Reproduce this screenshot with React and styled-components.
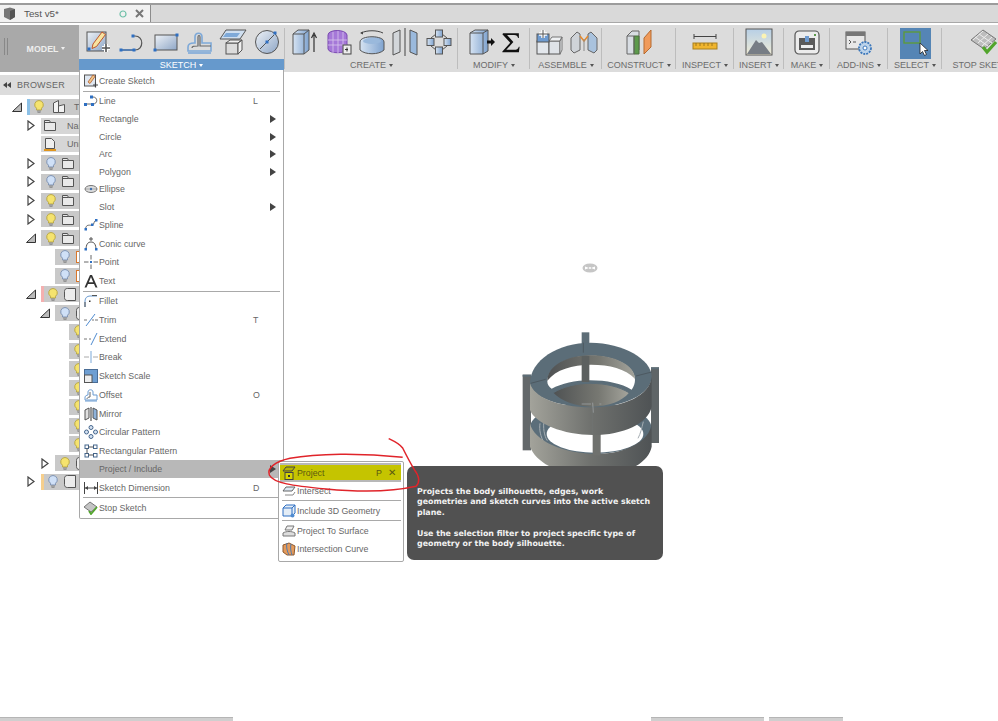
import React from "react";
import styled, { createGlobalStyle } from "styled-components";

const Global = createGlobalStyle`
  html, body { margin: 0; padding: 0; background: #fff; }
  body { font-family: "Liberation Sans", "Open Sans", sans-serif; }
`;

const Page = styled.div`
  position: relative; width: 998px; height: 721px; overflow: hidden; background: #fff;
  display: flex; flex-direction: column;
`;
const TabBar = styled.div`
  height: 17px; margin-top: 3px; border-top: 2px solid #9c9c9c; border-bottom: 1px solid #a8a8a8;
  background: #d9d9d9; display: flex; flex: none;
`;
const DocTab = styled.div`
  width: 151px; background: #f1f1f1; border-right: 1px solid #8c8c8c; display: flex; align-items: center;
  font-size: 9.8px; color: #555; padding-left: 3px; box-sizing: border-box; gap: 8px;
`;
const TabTitle = styled.span` flex: 1; `;
const Toolbar = styled.div`
  height: 47px; margin-top: 2px; background: #dcdcdc; display: flex; flex: none; overflow: hidden;
`;
const ModelBlock = styled.div`
  width: 79px; flex: none; background: #a9a9a9; color: #eee; font-size: 8.8px; font-weight: 700; display: flex;
  align-items: center; justify-content: center; gap: 3px; padding: 0 0 0 13px; box-sizing: border-box; position: relative;
  &::before { content: ""; position: absolute; left: 4px; top: 13px; width: 2px; height: 17px; border-left: 1px solid #888; border-right: 1px solid #888; }
`;
const Group = styled.div`
  width: ${p => p.$w}px; flex: none; display: flex; flex-direction: column; position: relative; box-sizing: border-box;
  ${p => p.$sep ? "&::after { content: ''; position: absolute; right: 0; top: 3px; bottom: 3px; width: 1px; background: #bdbdbd; }" : ""}
`;
const Icons = styled.div`
  height: 34px; display: flex; align-items: center; justify-content: ${p => p.$justify || "center"};
  gap: ${p => p.$gap || 0}px; padding-left: ${p => p.$pad || 0}px; box-sizing: border-box;
`;
const GroupLabel = styled.div`
  height: 11px; font-size: 9px; line-height: 11px; display: flex; align-items: center; justify-content: center; gap: 3px; padding-top: 1px; box-sizing: border-box;
  color: ${p => p.$active ? "#fff" : "#6b6b6b"}; background: ${p => p.$active ? "#6699cc" : "transparent"}; white-space: nowrap;
  margin-right: ${p => p.$active ? "1px" : "0"};
`;
const Caret = styled.i`
  width: 0; height: 0; border-left: 2.5px solid transparent; border-right: 2.5px solid transparent;
  border-top: 3px solid ${p => p.$c || "#555"};
`;
const SelectTile = styled.div`
  width: 31px; height: 31px; background: #5585b5; margin-top: 3px; display: flex;
`;
const Body = styled.div` flex: 1; display: flex; min-height: 0; `;
const Browser = styled.div` width: 284px; flex: none; padding-top: 3px; `;
const BrowserBar = styled.div`
  height: 20px; background: #dcdcdc; display: flex; align-items: center; gap: 6px; padding-left: 3px;
  font-size: 9px; color: #666; letter-spacing: .2px;
`;
const TreeRows = styled.div` display: flex; flex-direction: column; padding-top: 2.4px; `;
const TreeRow = styled.div`
  height: 18.75px; display: flex; align-items: center; padding-left: ${p => p.$x}px; position: relative;
`;
const Twisty = styled.span`
  width: ${p => p.$slot}px; display: flex; align-items: center; flex: none;
`;
const Chip = styled.div`
  flex: 1; height: 16px; background: ${p => p.$light ? "#d6d6d6" : "#c9c9c9"}; display: flex; align-items: center; gap: ${p => p.$gap || 6}px;
  padding-left: ${p => p.$light ? 3 : p.$strip ? 4 : 5}px; box-sizing: border-box; font-size: 9px; color: #666;
  border-left: ${p => p.$strip ? `3px solid ${p.$strip}` : "0"};
`;
const Canvas = styled.div` flex: 1; position: relative; `;
const Footer = styled.div` height: 4px; flex: none; display: flex; overflow: hidden; position: relative; `;
const FootBar = styled.div`
  width: ${p => p.$w}px; margin-left: ${p => p.$m}px; background: #cfcfcf; border-top: 1px solid #b5b5b5; flex: none;
`;
const Menu = styled.div`
  position: absolute; left: 79px; top: 70px; width: 205px; background: #fff; border: 1px solid #a8a8a8; border-top: 0;
  border-radius: 0 0 2px 2px; box-sizing: border-box; padding: 1px 0 0 0; display: flex; flex-direction: column; height: 449px;
`;
const Row = styled.div`
  height: ${p => p.$h}px; display: flex; align-items: center; flex: none; position: relative; font-size: 8.8px; color: #666; box-sizing: border-box;
  background: ${p => p.$hot ? "#b8b8b8" : "transparent"}; padding-left: 2px;
`;
const RowIcon = styled.span` width: 17px; height: 14px; display: flex; align-items: center; justify-content: center; flex: none; `;
const RowLabel = styled.span` flex: 1; white-space: nowrap; `;
const Shortcut = styled.span` width: 30px; flex: none; `;
const Arrow = styled.i`
  width: 0; height: 0; flex: none; margin-right: 7px; border-top: 4px solid transparent; border-bottom: 4px solid transparent;
  border-left: 6px solid #444;
`;
const Sep = styled.div` height: 1px; flex: none; margin: 0 3px; background: #a9a9a9; `;
const Sub = styled.div`
  position: absolute; left: 278px; top: 461px; width: 126px; height: 101px; background: #fff; border: 1px solid #a8a8a8;
  border-radius: 2px; box-sizing: border-box; padding: 1px 2px 0 1px; display: flex; flex-direction: column;
`;
const SubRow = styled(Row)`
  padding-left: 1px;
  background: ${p => p.$mark ? "#c5c400" : "transparent"};
  ${p => p.$mark ? "border-top: 2px solid #b8b8b8; border-bottom: 2px solid #b8b8b8; color: #5b5b10;" : ""}
`;
const SubIcon = styled(RowIcon)` width: 16px; `;
const SubKey = styled.span` width: 12px; flex: none; `;
const SubSep = styled.div` height: 1px; flex: none; background: #a9a9a9; margin-left: 2px; `;
const Close = styled.span` width: 13px; flex: none; font-size: 10px; line-height: 1; `;
const Tip = styled.div`
  position: absolute; left: 407px; top: 466px; width: 256px; height: 94px; background: #515151; border-radius: 7px;
  box-sizing: border-box; padding: 20.5px 8px 0 10px; color: #f2f2f2; font-family: "DejaVu Sans", sans-serif;
  font-weight: 700; font-size: 7.9px; line-height: 10.6px; white-space: nowrap;
`;
const TipGap = styled.div` height: 10.6px; `;
const Overlay = styled.svg` position: absolute; left: ${p => p.$x}px; top: ${p => p.$y}px; pointer-events: none; `;

const B = "#2e6fc2";
const S = ({ n = 28, children }) => <svg width={n} height={n} viewBox="0 0 28 28">{children}</svg>;
const Dot = ({ x, y }) => <rect x={x - 1.5} y={y - 1.5} width="3" height="3" fill={B} />;

const Defs = () => (
  <svg width="0" height="0" style={{ position: "absolute" }}>
    <defs>
      <linearGradient id="wall" x1="0" x2="1" y1="0" y2="0">
        <stop offset="0" stopColor="#a3a39b" /><stop offset=".5" stopColor="#6f716e" /><stop offset="1" stopColor="#4f5355" />
      </linearGradient>
      <linearGradient id="inner" x1="0" x2="1" y1="0" y2="0">
        <stop offset="0" stopColor="#4f5253" /><stop offset=".6" stopColor="#777872" /><stop offset="1" stopColor="#a4a49c" />
      </linearGradient>
      <linearGradient id="steel" x1="0" x2="1" y1="0" y2="1">
        <stop offset="0" stopColor="#eef2f7" /><stop offset="1" stopColor="#8ea6c6" />
      </linearGradient>
      <linearGradient id="blue3d" x1="0" x2="1" y1="0" y2="0">
        <stop offset="0" stopColor="#d6e3f2" /><stop offset="1" stopColor="#7fa3cf" />
      </linearGradient>
      <linearGradient id="mount" x1="0" x2="0" y1="0" y2="1">
        <stop offset="0" stopColor="#b7cfe6" /><stop offset="1" stopColor="#f0ecd6" />
      </linearGradient>
    </defs>
  </svg>
);

const tools = {
  sketch: <S><rect x="3" y="4" width="19" height="19" fill="url(#steel)" stroke="#555" /><path d="M9 16l9-12 3.500 2.500-9 12-4.500 2z" fill="#f7e3a0" stroke="#c0562a" /><path d="M18 20h8M22 16v8" stroke="#fff" strokeWidth="4" /><path d="M18 20h8M22 16v8" stroke="#555" strokeWidth="1.6" /><Dot x="5" y="21" /></S>,
  line: <S><path d="M3 22h14c9 0 9-14 0-14h-3" fill="none" stroke="#555" strokeWidth="1.2" /><Dot x="3" y="22" /><Dot x="16" y="22" /><Dot x="15" y="8" /><path d="M3 22h13" stroke={B} strokeWidth="1.2" /></S>,
  rect: <S><rect x="3" y="7" width="22" height="15" fill="url(#steel)" stroke="#555" /><Dot x="3" y="22" /><Dot x="25" y="7" /></S>,
  offset: <S><path d="M3 23v-4c0-3 3-4 6-4h1V9c0-5 7-5 7 0v6h9v8z" fill="none" stroke="#7ea9d8" strokeWidth="1.6" /><path d="M7 20c0-2 2-2 6-2V9c0-2 2-2 2 0v9h11" fill="none" stroke="#666" strokeWidth="1.2" /><path d="M3 25h23" stroke="#7ea9d8" strokeWidth="1.6" /></S>,
  project: <S><path d="M7 2h20l-6 9H1z" fill="#cfdff0" stroke="#555" /><path d="M7 5h14l-3 4H4z" fill="#7ea9d8" /><rect x="7" y="15" width="12" height="11" fill="#dcdcdc" stroke="#555" /><path d="M7 15l4-3h12l-4 3zM19 15l4-3v10l-4 4z" fill="#f0f0f0" stroke="#555" /></S>,
  circle: <S><circle cx="14" cy="14" r="11.5" fill="url(#steel)" stroke="#555" /><path d="M7 21L21 7" stroke="#555" /><Dot x="14" y="14" /><Dot x="22" y="5" /></S>,
  extrude: <S><path d="M3 6l5-4h11v20l-5 4H3z" fill="url(#blue3d)" stroke="#555" /><path d="M3 6h11v20M14 6l5-4" fill="none" stroke="#555" /><path d="M24 24V7M21.5 10L24 5l2.5 5" fill="none" stroke="#333" strokeWidth="1.2" /></S>,
  mesh: <S><path d="M4 7c0-6 18-6 19 0v14c-1 5-18 5-19 0z" fill="#a578d8" stroke="#7a4bb0" /><path d="M4 12h19M4 17h19M9 4v22M14 3v24M19 4v22" stroke="#d9c6ee" strokeWidth=".8" /><rect x="19" y="17" width="8" height="9" fill="#eee" stroke="#444" /><path d="M21 21.500h3M23 19.500v4" stroke="#333" /></S>,
  revolve: <S><path d="M2 14c0-7 24-7 24 0v8c-5 5-19 5-24 0z" fill="url(#blue3d)" stroke="#555" /><ellipse cx="14" cy="13" rx="9" ry="3" fill="#9ab9dc" /><path d="M3 5c6-3 16-3 22 0" fill="none" stroke="#444" /><path d="M2 5l3-1.500v3z" fill="#444" /></S>,
  mirror: <S><path d="M2 5l7-3v22l-7 3z" fill="#d2d6da" stroke="#555" /><path d="M26 5l-7-3v22l7 3z" fill="#9ab9dc" stroke="#555" /><path d="M14 0v28" stroke="#444" /></S>,
  pattern: <S><g fill="url(#blue3d)" stroke="#555"><rect x="10.500" y="2" width="7" height="7" /><rect x="19" y="10.500" width="7" height="7" /><rect x="10.500" y="19" width="7" height="7" /><rect x="2" y="10.500" width="7" height="7" /></g><path d="M6 10l5-4M22 10l-5-4M6 18l5 4M22 18l-5 4" stroke="#555" /></S>,
  press: <S><path d="M3 5l5-3h13v21l-5 3H3z" fill="url(#blue3d)" stroke="#555" /><path d="M3 5h13v21M16 5l5-3" fill="none" stroke="#555" /><path d="M20 14h5" stroke="#111" strokeWidth="3" /><path d="M24 10l4 4-4 4z" fill="#111" /></S>,
  sigma: <svg width="22" height="24" viewBox="0 0 28 28"><path d="M4 3h20v6h-1c-.5-3-2-4-5-4H9l8 9-9 10h10c3 0 5-1 6-4h1l-1 7H3v-1l10-11L3 4z" fill="#111" /></svg>,
  joint: <S><rect x="2" y="13" width="12" height="13" fill="#e3e7ec" stroke="#555" /><rect x="14" y="13" width="11" height="13" fill="#dfe3e8" stroke="#555" /><path d="M14 13l3-4h10l-2 4zM25 13l2-4v13l-2 4z" fill="#eef0f2" stroke="#777" /><rect x="2" y="6" width="12" height="8" fill="#6e9bd0" stroke="#555" /><path d="M4 6h8M8 2v8" stroke="#fff" strokeWidth="3.500" /><path d="M4 6h8M8 2v8" stroke="#555" strokeWidth="1" /></S>,
  motion: <S><path d="M1 10l6-6 3 2v16l-6 3-3-3z" fill="#cfd3d8" stroke="#666" /><path d="M27 10l-6-6-3 2v16l6 3 3-3z" fill="#a9c2dd" stroke="#666" /><path d="M10 8l4 5 4-5" fill="none" stroke="#e58a2e" strokeWidth="1.500" /><path d="M14 11v12" stroke="#888" /></S>,
  plane: <S><path d="M2 8l5-5h7v19l-5 4H2z" fill="#d8dde3" stroke="#666" /><path d="M9 8h5v18H9z" fill="#5c9a4c" stroke="#4a6f3c" /><path d="M2 8h7v18" fill="none" stroke="#666" /><path d="M19 10l7-8v17l-7 7z" fill="#f09a5a" stroke="#b56a30" /></S>,
  ruler: <S><path d="M3 6v5M25 6v5M3 8.500h22" stroke="#444" /><rect x="2" y="15" width="24" height="6" fill="#f0b52e" stroke="#a9801f" /><path d="M5 15v3M9 15v3M13 15v3M17 15v3M21 15v3" stroke="#8a6a1a" strokeWidth=".8" /></S>,
  image: <S><rect x="1" y="1" width="26" height="26" fill="url(#mount)" stroke="#555" /><circle cx="19" cy="8" r="2.500" fill="#fbf3b4" /><path d="M2 26l9-14 3 3 3-1 9 12z" fill="#777d85" /></S>,
  make: <S><rect x="2" y="3" width="24" height="23" rx="4" fill="#ececec" stroke="#555" strokeWidth="1.200" /><rect x="6" y="10" width="16" height="12" fill="#5a5a5a" /><rect x="12" y="8" width="4" height="6" fill="#6e9bd0" /><path d="M8 17h12v3H8z" fill="#eee" /><rect x="21" y="6" width="2" height="2" fill="#5c9a4c" /></S>,
  addin: <S><rect x="1" y="4" width="19" height="17" fill="#e8e8e8" stroke="#555" /><rect x="1" y="4" width="19" height="4" fill="#777" /><path d="M4 12l2 2-2 2M8 14h3" stroke="#555" fill="none" /><circle cx="20" cy="20" r="6" fill="#bcd3ea" stroke="#3d78bb" strokeWidth="1.800" strokeDasharray="2 1" /><circle cx="20" cy="20" r="2" fill="#fff" stroke="#3d78bb" /></S>,
  cursor: <svg width="31" height="31" viewBox="0 0 31 31"><rect x="4" y="4" width="16" height="11" fill="none" stroke="#5d9a3c" strokeWidth="1.400" /><path d="M20 15v11l2.500-2.500 2 4 2-1-2-4 3.500 0z" fill="#fff" stroke="#222" strokeWidth=".8" /></svg>,
  stop: <S><path d="M1 12L13 2l13 9-12 10z" fill="#bdbdbd" stroke="#777" /><path d="M5 9l13 9M9 6l13 9M13 3L3 12M18 6L8 15M22 9L12 18" stroke="#eee" /><path d="M13 19l4 5 9-10" fill="none" stroke="#52a52c" strokeWidth="3.200" /></S>,
};

const m = {
  line: <svg width="14" height="12" viewBox="0 0 14 12"><path d="M1 9h8c5 0 5-7 0-7H7" fill="none" stroke="#666" /><rect y="8" width="3" height="3" fill={B} /><rect x="7" y="8" width="3" height="3" fill={B} /><rect x="6" y="0.500" width="3" height="3" fill={B} /></svg>,
  ellipse: <svg width="14" height="10" viewBox="0 0 14 10"><ellipse cx="7" cy="5" rx="6" ry="3.500" fill="#ddd" stroke="#777" /><circle cx="7" cy="5" r="1.200" fill={B} /><path d="M1 5h12" stroke="#777" strokeWidth=".5" /></svg>,
  spline: <svg width="14" height="14" viewBox="0 0 14 14"><path d="M1.500 12c0-7 5-4 7-5s1-4 4-5" fill="none" stroke="#666" /><rect x="0.500" y="10" width="2.500" height="2.500" fill={B} /><rect x="7" y="5.500" width="2.500" height="2.500" fill={B} /><rect x="11" y="1" width="2.500" height="2.500" fill={B} /></svg>,
  conic: <svg width="14" height="14" viewBox="0 0 14 14"><path d="M2 13c0-6 2-8 5-8s5 2 5 8" fill="none" stroke="#555" /><path d="M7 0v4M5 2h4" stroke="#555" /><rect x="0.500" y="11" width="2.500" height="2.500" fill={B} /><rect x="11" y="11" width="2.500" height="2.500" fill={B} /></svg>,
  point: <svg width="14" height="14" viewBox="0 0 14 14"><path d="M0 7h4.500M9.500 7H14M7 0v4.500M7 9.500V14" stroke="#666" /><rect x="6" y="6" width="2" height="2" fill={B} /></svg>,
  text: <svg width="14" height="14" viewBox="0 0 14 14"><path d="M0.500 13.500L6 1h2l5.500 12.500h-2L10 10H4l-1.500 3.500zM4.800 8.200h4.400L7 3z" fill="#333" /></svg>,
  fillet: <svg width="14" height="14" viewBox="0 0 14 14"><path d="M1 13V7c0-3 2-5 5-5h7" fill="none" stroke="#6a9bd1" /><path d="M1 8v5M8 1.500h5" stroke="#555" /><rect x="5" y="6.500" width="1.500" height="1.500" fill="#333" /></svg>,
  trim: <svg width="14" height="14" viewBox="0 0 14 14"><path d="M0 7h3M8 7h2M11 7h3" stroke="#777" /><path d="M2 13L11 1" stroke="#4f8bd0" /></svg>,
  extend: <svg width="14" height="14" viewBox="0 0 14 14"><path d="M0 7h3M5 7h2" stroke="#777" /><path d="M7 13L13 1" stroke="#4f8bd0" /></svg>,
  break: <svg width="14" height="14" viewBox="0 0 14 14"><path d="M0 7h5M9 7h5" stroke="#aaa" /><path d="M7 1v12" stroke="#7ba8d8" /></svg>,
  scale: <svg width="14" height="14" viewBox="0 0 14 14"><rect x="0.500" y="0.500" width="13" height="13" fill="#6f9fd2" stroke="#4a6d96" /><rect x="0.500" y="6" width="7.500" height="7.500" fill="#eee" stroke="#555" /></svg>,
  offset: <svg width="14" height="14" viewBox="0 0 14 14"><path d="M1 12V9c0-1 2-2 3-2V4c0-3 5-3 5 0v3h4v5z" fill="none" stroke="#6a9bd1" /><path d="M1 13h12" stroke="#6a9bd1" /><path d="M3 11c0-1 1-2 3-2V4" fill="none" stroke="#666" /></svg>,
  mirror: <svg width="14" height="14" viewBox="0 0 14 14"><path d="M1 3l4-2v10l-4 2z" fill="#e0e0e0" stroke="#555" /><path d="M13 3L9 1v10l4 2z" fill="#8fb2d9" stroke="#555" /><path d="M7 0v14" stroke="#333" /></svg>,
  circular: <svg width="14" height="14" viewBox="0 0 14 14"><g fill="#d6e3f2" stroke="#45668c"><circle cx="7" cy="2.500" r="2" /><circle cx="11.500" cy="7" r="2" /><circle cx="7" cy="11.500" r="2" /><circle cx="2.500" cy="7" r="2" /></g></svg>,
  rectp: <svg width="14" height="14" viewBox="0 0 14 14"><g fill="#fff" stroke="#45668c"><rect x="1" y="1" width="3.500" height="3.500" /><rect x="9.500" y="1" width="3.500" height="3.500" /><rect x="1" y="9.500" width="3.500" height="3.500" /><rect x="9.500" y="9.500" width="3.500" height="3.500" /></g><path d="M4.500 3h5M3 4.500v5M4.500 11h5" stroke="#555" /></svg>,
  dim: <svg width="14" height="14" viewBox="0 0 14 14"><path d="M.5 1v12M13.500 1v12M1 7h12" stroke="#444" /><path d="M1 7l3-2v4zM13 7l-3-2v4z" fill="#444" /></svg>,
  stop: <svg width="14" height="14" viewBox="0 0 14 14"><path d="M0 6l6-5 7 5-6 5z" fill="#c4c4c4" stroke="#777" /><path d="M5 10l2 3 6-7" fill="none" stroke="#52a52c" strokeWidth="1.800" /></svg>,
  create: <svg width="14" height="14" viewBox="0 0 14 14"><rect x=".500" y="1" width="11" height="11" fill="#dfe7f1" stroke="#555" /><path d="M4 8l5-7 2 1.500-5 7z" fill="#f0c98a" stroke="#b65c2b" strokeWidth=".8" /><path d="M9 11h5M11.500 8.500v5" stroke="#444" strokeWidth="1.200" /></svg>,
  project: <svg width="14" height="14" viewBox="0 0 14 14"><path d="M4 1h9l-3 4H1z" fill="#b5b400" stroke="#444" /><rect x="3" y="6.500" width="8" height="7" fill="#d6d400" stroke="#444" /><rect x="6" y="9" width="2" height="2" fill="#333" /></svg>,
  intersect: <svg width="14" height="10" viewBox="0 0 14 10"><path d="M4 1h9l-3 4H1z" fill="#dce7f3" stroke="#666" /><path d="M3 9h8l2-3" fill="none" stroke="#888" /></svg>,
  include: <svg width="14" height="14" viewBox="0 0 14 14"><path d="M1 4l3-3h9v8l-3 3H1z" fill="#e4edf6" stroke="#2e6fc2" /><path d="M1 4h9v8M10 4l3-3" fill="none" stroke="#2e6fc2" /><circle cx="10.500" cy="11.500" r="2" fill="#4f8bd0" /></svg>,
  surface: <svg width="14" height="12" viewBox="0 0 14 12"><path d="M1 11V8c3-2 9-2 12 0v3z" fill="#ddd" stroke="#777" /><path d="M5 1h7l-2 4H3z" fill="#eee" stroke="#777" /></svg>,
  curve: <svg width="14" height="14" viewBox="0 0 14 14"><path d="M1 3l6-2 6 3-1 9-7 0-4-3z" fill="#e59a5a" stroke="#8c5a30" /><path d="M5 1c-1 4 0 8 2 12M9 2c-1 4 0 8 1 11" stroke="#4f7bb0" fill="none" /></svg>,
};

const menu = [
  { l: "Create Sketch", i: m.create, h: 20 }, { sep: 1 },
  { l: "Line", i: m.line, k: "L", h: 18 }, { l: "Rectangle", a: 1, h: 18 }, { l: "Circle", a: 1, h: 17 }, { l: "Arc", a: 1, h: 18 },
  { l: "Polygon", a: 1, h: 17 }, { l: "Ellipse", i: m.ellipse, h: 18 }, { l: "Slot", a: 1, h: 18 }, { l: "Spline", i: m.spline, h: 18 },
  { l: "Conic curve", i: m.conic, h: 19 }, { l: "Point", i: m.point, h: 18 }, { l: "Text", i: m.text, h: 20 }, { sep: 1 },
  { l: "Fillet", i: m.fillet, h: 18 }, { l: "Trim", i: m.trim, k: "T", h: 19 }, { l: "Extend", i: m.extend, h: 19 }, { l: "Break", i: m.break, h: 18 },
  { l: "Sketch Scale", i: m.scale, h: 19 }, { l: "Offset", i: m.offset, k: "O", h: 19 }, { l: "Mirror", i: m.mirror, h: 19 },
  { l: "Circular Pattern", i: m.circular, h: 18 }, { l: "Rectangular Pattern", i: m.rectp, h: 19 },
  { l: "Project / Include", a: 1, hot: 1, h: 18 }, { l: "Sketch Dimension", i: m.dim, k: "D", h: 19 }, { sep: 1 }, { l: "Stop Sketch", i: m.stop, h: 20 },
];

const Bulb = ({ on }) => (
  <svg width="10" height="13" viewBox="0 0 10 13"><path d="M5 .5a4.300 4.300 0 0 0-2.500 7.800V10h5V8.300A4.300 4.300 0 0 0 5 .5z" fill={on ? "#f5e36e" : "#cfe0f7"} stroke={on ? "#b9a84a" : "#7f93b3"} /><path d="M3 11h4M3.500 12.300h3" stroke="#888" /></svg>
);
const Folder = () => <svg width="12" height="11" viewBox="0 0 12 11"><path d="M.5 10.500V.5h5l1 2h5v8z" fill="#e9e9e9" stroke="#555" /><path d="M.5 2.500h6" stroke="#555" /></svg>;
const Doc = () => <svg width="12" height="13" viewBox="0 0 12 13"><path d="M1.500 .5h6l3 3v7h-9z" fill="#efefef" stroke="#555" /><path d="M0 11h12v2H0z" fill="#e0961e" /></svg>;
const Comp = () => <svg width="12" height="13" viewBox="0 0 12 13"><path d="M.5 3l5-2.500v12H.5z" fill="#f2f2f2" stroke="#555" /><path d="M5.500 6l6-1.500v8h-6z" fill="#f2f2f2" stroke="#555" /></svg>;
const Body3d = () => <svg width="12" height="13" viewBox="0 0 12 13"><path d="M.5 3.500c0-2 1-3 3-3h8v12h-8c-2 0-3-1-3-3z" fill="#ececec" stroke="#555" /></svg>;
const Sk = () => <svg width="6" height="12" viewBox="0 0 6 12"><rect x=".5" y=".5" width="8" height="11" fill="#fff" stroke="#d9772a" /></svg>;
const Open = () => <svg width="10" height="10" viewBox="0 0 10 10"><path d="M9.500 1v8.500H.5z" fill="#bbb" stroke="#333" /></svg>;
const Closed = () => <svg width="8" height="11" viewBox="0 0 8 11"><path d="M1 1l6 4.500L1 10z" fill="#fff" stroke="#444" strokeWidth="1.200" /></svg>;

const tree = [
  { x: 12, s: 15, t: "o", b: 1, ic: <Comp />, tx: "T", st: "#8cc0e6", g: 9 },
  { x: 27, s: 14, t: "c", ic: <Folder />, tx: "Nar", nb: 1, g: 11 },
  { x: 41, s: 0, ic: <Doc />, tx: "Uni", nb: 1, g: 11 },
  { x: 27, s: 14, t: "c", ic: <Folder /> }, { x: 27, s: 14, t: "c", ic: <Folder /> },
  { x: 27, s: 14, t: "c", b: 1, ic: <Folder /> }, { x: 27, s: 14, t: "c", b: 1, ic: <Folder /> },
  { x: 26, s: 15, t: "o", b: 1, ic: <Folder /> },
  { x: 55, s: 0, ic: <Sk /> }, { x: 55, s: 0, ic: <Sk /> },
  { x: 26, s: 15, t: "o", b: 1, ic: <Body3d />, st: "#f4b0b0" },
  { x: 40, s: 15, t: "o", ic: <Body3d /> },
  ...Array.from({ length: 7 }, () => ({ x: 69, s: 0, b: 1, ic: <Body3d /> })),
  { x: 41, s: 14, t: "c", b: 1, ic: <Body3d /> },
  { x: 27, s: 14, t: "c", ic: <Body3d />, st: "#f6cf8d" },
];

const Label = ({ text, active }) => (
  <GroupLabel $active={active}>{text}<Caret $c={active ? "#fff" : "#555"} /></GroupLabel>
);

const Model = () => (
  <Overlay $x={216} $y={178} width="170" height="225" viewBox="0 0 510 675">
    <defs>
      <clipPath id="cut"><rect x="0" y="0" width="510" height="648" /></clipPath>
    </defs>
    <g clipPath="url(#cut)">
      <rect x="245" y="247" width="23" height="48" fill="#5d6d77" />
      <rect x="245" y="290" width="23" height="110" fill="#5c605f" />
      <rect x="68" y="374" width="25" height="227" fill="#63686a" />
      <rect x="68" y="374" width="25" height="6" fill="#5d6d77" />
      <rect x="453" y="352" width="24" height="227" fill="#5f6567" />
      <rect x="453" y="352" width="24" height="6" fill="#5d6d77" />
      <ellipse cx="272" cy="535" rx="183" ry="78" fill="#5b6e7a" />
      <ellipse cx="285" cy="552" rx="145" ry="56" fill="#fff" />
      <path d="M120 520c-3 20 2 40 12 58M132 512c-3 20 0 45 10 60M430 515c-5 20-8 35-16 50" stroke="#a5adb2" strokeWidth="3" fill="none" />
      <path d="M90 520v70c20 55 110 90 190 90s165-35 175-90v-70c-5 55-80 92-165 92-100 0-190-40-200-92z" fill="url(#wall)" />
      <rect x="278" y="545" width="24" height="72" fill="#6f716e" />
      <path d="M90 400c0-70 85-122 182-122s183 50 183 102-85 92-182 92S90 440 90 400z" fill="#5b6d78" />
      <path d="M142 395c0-45 60-78 131-78s132 30 132 72c0 10-3 20-10 30-30-18-75-28-125-28-45 0-85 10-115 25-8-6-13-13-13-21z" fill="#fff" />
      <path d="M142 392c0-45 60-76 131-76s132 30 132 70c-30-30-75-42-132-42s-105 15-131 48z" fill="url(#inner)" />
      <rect x="245" y="318" width="23" height="78" fill="#5c605f" />
      <path d="M160 428c30-18 70-28 112-28 45 0 85 10 115 28-20 25-60 40-112 42-50-2-90-16-115-42z" fill="url(#inner)" />
      <path d="M160 428c30-18 70-28 112-28 45 0 85 10 115 28" fill="none" stroke="#5b6d78" strokeWidth="3" />
      <path d="M90 400v80c15 40 100 75 190 75s165-35 175-85v-90c-5 55-80 92-182 92S100 440 90 400z" fill="url(#wall)" />
      <path d="M245 462h28M278 458l2 30M298 462h6" stroke="#a8adb0" strokeWidth="2" />
      <path d="M278 472v80" stroke="#77797a" />
      <path d="M92 400l45-12M408 378l47-12M250 278v30" stroke="#4d5961" strokeWidth="3" />
    </g>
  </Overlay>
);

export default function App() {
  return (
    <Page>
      <Global />
      <Defs />
      <TabBar>
        <DocTab>
          <svg width="13" height="14" viewBox="0 0 13 14"><path d="M1 2l6-1.500 5 1.500v8l-5 3-6-3z" fill="#777" /><path d="M7 4v9l5-3V2z" fill="#555" /></svg>
          <TabTitle>Test v5*</TabTitle>
          <svg width="8" height="8" viewBox="0 0 8 8"><circle cx="4" cy="4" r="3" fill="none" stroke="#6fc0a8" strokeWidth="1.200" /></svg>
          <svg width="9" height="9" viewBox="0 0 9 9" style={{ marginRight: 6 }}><path d="M1 1l7 7M8 1L1 8" stroke="#777" strokeWidth="2" /></svg>
        </DocTab>
      </TabBar>
      <Toolbar>
        <ModelBlock>MODEL <Caret $c="#eee" /></ModelBlock>
        <Group $w={206} $sep>
          <Icons $gap={5.800} $pad={1}>{tools.sketch}{tools.line}{tools.rect}{tools.offset}{tools.project}{tools.circle}</Icons>
          <Label text="SKETCH" active />
        </Group>
        <Group $w={173} $sep>
          <Icons $gap={5.800}>{tools.extrude}{tools.mesh}{tools.revolve}{tools.mirror}{tools.pattern}</Icons>
          <Label text="CREATE" />
        </Group>
        <Group $w={72} $sep>
          <Icons $gap={5}>{tools.press}{tools.sigma}</Icons>
          <Label text="MODIFY" />
        </Group>
        <Group $w={72} $sep>
          <Icons $gap={7}>{tools.joint}{tools.motion}</Icons>
          <Label text="ASSEMBLE" />
        </Group>
        <Group $w={74} $sep>
          <Icons>{tools.plane}</Icons>
          <Label text="CONSTRUCT" />
        </Group>
        <Group $w={58} $sep>
          <Icons>{tools.ruler}</Icons>
          <Label text="INSPECT" />
        </Group>
        <Group $w={50} $sep>
          <Icons>{tools.image}</Icons>
          <Label text="INSERT" />
        </Group>
        <Group $w={46} $sep>
          <Icons>{tools.make}</Icons>
          <Label text="MAKE" />
        </Group>
        <Group $w={58} $sep>
          <Icons>{tools.addin}</Icons>
          <Label text="ADD-INS" />
        </Group>
        <Group $w={54} $sep>
          <Icons><SelectTile>{tools.cursor}</SelectTile></Icons>
          <Label text="SELECT" />
        </Group>
        <Group $w={84}>
          <Icons>{tools.stop}</Icons>
          <GroupLabel>STOP SKETCH</GroupLabel>
        </Group>
      </Toolbar>
      <Body>
        <Browser>
          <BrowserBar>
            <svg width="8" height="6" viewBox="0 0 8 6"><path d="M4 0v6L0 3zM8 0v6L4 3z" fill="#444" /></svg>
            BROWSER
          </BrowserBar>
          <TreeRows>
            {tree.map((r, i) => (
              <TreeRow key={i} $x={r.x}>
                {r.s > 0 && <Twisty $slot={r.s}>{r.t === "o" ? <Open /> : <Closed />}</Twisty>}
                <Chip $strip={r.st} $light={r.nb} $gap={r.g}>
                  {!r.nb && <Bulb on={r.b} />}
                  {r.ic}
                  {r.tx && <span>{r.tx}</span>}
                </Chip>
              </TreeRow>
            ))}
          </TreeRows>
        </Browser>
        <Canvas>
          <Overlay $x={298} $y={191} width="16" height="10" viewBox="0 0 16 10">
            <ellipse cx="8" cy="5" rx="7.500" ry="4.500" fill="#c6c6c6" />
            <path d="M3 3.500l4 1.500-4 1.500zM13 3.500l-4 1.500 4 1.500z" fill="#fff" />
            <circle cx="8" cy="5" r="1" fill="#fff" />
          </Overlay>
          <Model />
        </Canvas>
      </Body>
      <Footer>
        <FootBar $w={233} $m={0} />
        <FootBar $w={113} $m={418} />
        <FootBar $w={74} $m={5} />
      </Footer>

      <Menu>
        {menu.map((r, i) => r.sep ? <Sep key={i} /> : (
          <Row key={i} $h={r.h} $hot={r.hot}>
            <RowIcon>{r.i}</RowIcon>
            <RowLabel>{r.l}</RowLabel>
            {r.k && <Shortcut>{r.k}</Shortcut>}
            {r.a && <Arrow />}
          </Row>
        ))}
      </Menu>
      <Sub>
        <SubRow $mark $h={19}>
          <SubIcon>{m.project}</SubIcon><RowLabel>Project</RowLabel><SubKey>P</SubKey>
          <Close>✕</Close>
        </SubRow>
        <SubRow $h={18}><SubIcon>{m.intersect}</SubIcon><RowLabel>Intersect</RowLabel></SubRow>
        <SubSep />
        <SubRow $h={19}><SubIcon>{m.include}</SubIcon><RowLabel>Include 3D Geometry</RowLabel></SubRow>
        <SubSep />
        <SubRow $h={19}><SubIcon>{m.surface}</SubIcon><RowLabel>Project To Surface</RowLabel></SubRow>
        <SubRow $h={18}><SubIcon>{m.curve}</SubIcon><RowLabel>Intersection Curve</RowLabel></SubRow>
      </Sub>
      <Tip>
        Projects the body silhouette, edges, work<br />
        geometries and sketch curves into the active sketch<br />
        plane.
        <TipGap />
        Use the selection filter to project specific type of<br />
        geometry or the body silhouette.
      </Tip>
      <Overlay $x={260} $y={430} width="410" height="140" viewBox="0 0 1230 420">
        <path d="M428 82C300 68 170 70 90 85 45 95 20 115 28 135c12 25 70 32 170 42 110 10 200 8 270-8 12-12 10-30-5-50-15-25-25-45-35-65-12-15-25-20-42-28" fill="none" stroke="#e0242a" strokeWidth="4.500" />
      </Overlay>
    </Page>
  );
}
